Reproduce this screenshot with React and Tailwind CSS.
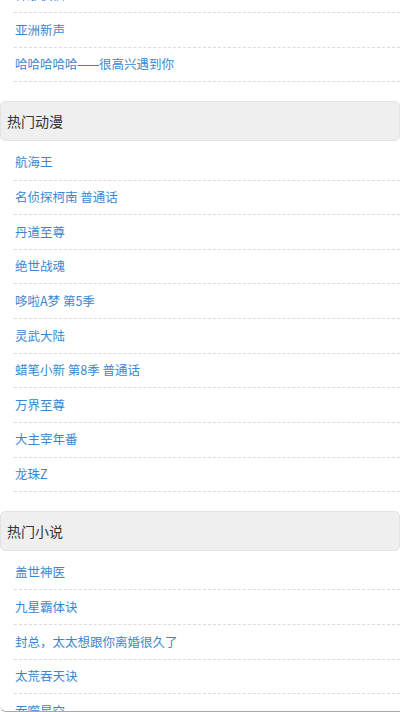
import React from "react";

const sections = [
  {
    title: null,
    items: ["神雕侠侣", "亚洲新声", "DASH"],
  },
  {
    title: "热门动漫",
    items: ["航海王", "名侦探柯南 普通话", "丹道至尊", "绝世战魂", "哆啦A梦 第5季", "灵武大陆", "蜡笔小新 第8季 普通话", "万界至尊", "大主宰年番", "龙珠Z"],
  },
  {
    title: "热门小说",
    items: ["盖世神医", "九星霸体诀", "封总，太太想跟你离婚很久了", "太荒吞天诀", "吞噬星空"],
  },
];

function Label({ t }) {
  if (t === "DASH") {
    return (
      <span>
        哈哈哈哈哈
        <span className="tracking-[-3.5px]" style={{ fontFamily: '"Liberation Sans", sans-serif' }}>——</span>
        <span className="ml-[3.5px]">很高兴遇到你</span>
      </span>
    );
  }
  return <span>{t}</span>;
}

export default function App() {
  return (
    <div
      className="h-[712px] w-[400px] overflow-hidden bg-white border-b border-[#a8a8a8] rounded-bl-[6px]"
      style={{ fontFamily: '"Noto Sans CJK SC", "Liberation Sans", sans-serif' }}
    >
      <div className="-mt-[21.5px]">
        {sections.map((s, i) => (
          <div key={i} className={i > 0 ? "mt-[19px]" : ""}>
            {s.title && (
              <div className="h-[40px] flex items-center px-[6px] bg-[#efefef] border border-[#e3e3e3] rounded-[5px] text-[14px] text-[#333] mb-[4.5px]">
                {s.title}
              </div>
            )}
            <ul className="pl-[14px]">
              {s.items.map((t) => (
                <li
                  key={t}
                  className="h-[34.65px] flex items-center pl-[1px] border-b border-dashed border-[#dcdcdc] text-[12.5px] text-[#3a87d0]"
                >
                  <Label t={t} />
                </li>
              ))}
            </ul>
          </div>
        ))}
      </div>
    </div>
  );
}
